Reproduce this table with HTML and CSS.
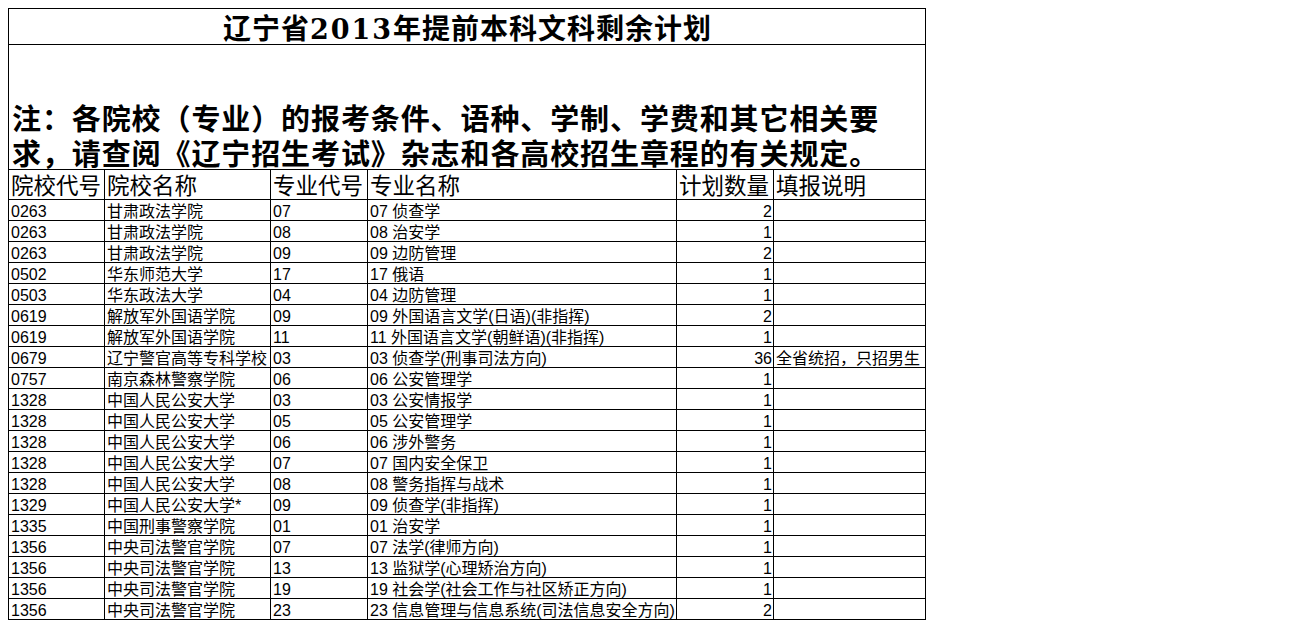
FILE: index.html
```html
<!DOCTYPE html>
<html lang="zh-CN">
<head>
<meta charset="utf-8">
<title>辽宁省2013年提前本科文科剩余计划</title>
<link rel="stylesheet" href="styles.css">
</head>
<body>
<table class="sheet">
  <colgroup>
    <col class="c1"><col class="c2"><col class="c3"><col class="c4"><col class="c5"><col class="c6">
  </colgroup>
  <tbody>
    <tr class="title-row"><td colspan="6" class="title">辽宁省<span class="digits">2013</span>年提前本科文科剩余计划</td></tr>
    <tr class="note-row"><td colspan="6" class="note"><span class="note-line first">注：各院校（专业）的报考条件、语种、学制、学费和其它相关要</span><span class="note-line last">求，请查阅《辽宁招生考试》杂志和各高校招生章程的有关规定。</span></td></tr>
    <tr class="head-row"><td>院校代号</td><td>院校名称</td><td>专业代号</td><td>专业名称</td><td>计划数量</td><td>填报说明</td></tr>
    <tr><td>0263</td><td>甘肃政法学院</td><td>07</td><td>07 侦查学</td><td class="num">2</td><td></td></tr>
    <tr><td>0263</td><td>甘肃政法学院</td><td>08</td><td>08 治安学</td><td class="num">1</td><td></td></tr>
    <tr><td>0263</td><td>甘肃政法学院</td><td>09</td><td>09 边防管理</td><td class="num">2</td><td></td></tr>
    <tr><td>0502</td><td>华东师范大学</td><td>17</td><td>17 俄语</td><td class="num">1</td><td></td></tr>
    <tr><td>0503</td><td>华东政法大学</td><td>04</td><td>04 边防管理</td><td class="num">1</td><td></td></tr>
    <tr><td>0619</td><td>解放军外国语学院</td><td>09</td><td>09 外国语言文学(日语)(非指挥)</td><td class="num">2</td><td></td></tr>
    <tr><td>0619</td><td>解放军外国语学院</td><td>11</td><td>11 外国语言文学(朝鲜语)(非指挥)</td><td class="num">1</td><td></td></tr>
    <tr><td>0679</td><td>辽宁警官高等专科学校</td><td>03</td><td>03 侦查学(刑事司法方向)</td><td class="num">36</td><td>全省统招，只招男生</td></tr>
    <tr><td>0757</td><td>南京森林警察学院</td><td>06</td><td>06 公安管理学</td><td class="num">1</td><td></td></tr>
    <tr><td>1328</td><td>中国人民公安大学</td><td>03</td><td>03 公安情报学</td><td class="num">1</td><td></td></tr>
    <tr><td>1328</td><td>中国人民公安大学</td><td>05</td><td>05 公安管理学</td><td class="num">1</td><td></td></tr>
    <tr><td>1328</td><td>中国人民公安大学</td><td>06</td><td>06 涉外警务</td><td class="num">1</td><td></td></tr>
    <tr><td>1328</td><td>中国人民公安大学</td><td>07</td><td>07 国内安全保卫</td><td class="num">1</td><td></td></tr>
    <tr><td>1328</td><td>中国人民公安大学</td><td>08</td><td>08 警务指挥与战术</td><td class="num">1</td><td></td></tr>
    <tr><td>1329</td><td>中国人民公安大学*</td><td>09</td><td>09 侦查学(非指挥)</td><td class="num">1</td><td></td></tr>
    <tr><td>1335</td><td>中国刑事警察学院</td><td>01</td><td>01 治安学</td><td class="num">1</td><td></td></tr>
    <tr><td>1356</td><td>中央司法警官学院</td><td>07</td><td>07 法学(律师方向)</td><td class="num">1</td><td></td></tr>
    <tr><td>1356</td><td>中央司法警官学院</td><td>13</td><td>13 监狱学(心理矫治方向)</td><td class="num">1</td><td></td></tr>
    <tr><td>1356</td><td>中央司法警官学院</td><td>19</td><td>19 社会学(社会工作与社区矫正方向)</td><td class="num">1</td><td></td></tr>
    <tr><td>1356</td><td>中央司法警官学院</td><td>23</td><td>23 信息管理与信息系统(司法信息安全方向)</td><td class="num">2</td><td></td></tr>
  </tbody>
</table>
</body>
</html>
```

FILE: styles.css
```css
html, body {
  background: #ffffff;
}
body {
  margin: 8px;
  color: #000000;
  font-family: "Liberation Sans", "Noto Sans CJK SC", sans-serif;
}
.sheet {
  border-collapse: collapse;
  table-layout: fixed;
  width: 917px;
  border: 1px solid #000;
}
.c1 { width: 96px; }
.c2 { width: 166px; }
.c3 { width: 97px; }
.c4 { width: 309px; }
.c5 { width: 97px; }
.c6 { width: 152px; }

.sheet td {
  border: 1px solid #000;
  padding: 0 1px 0 2px;
  height: 20px;
  line-height: 17px;
  font-size: 16px;
  white-space: nowrap;
  overflow: hidden;
  vertical-align: bottom;
}
.sheet td.num {
  text-align: right;
}
.sheet .title-row td.title {
  height: 29px;
  padding-top: 6px;
  line-height: 29px;
  text-align: center;
  vertical-align: top;
  font-family: "Liberation Serif", "Noto Sans CJK SC", serif;
  font-size: 28px;
  font-weight: 700;
  letter-spacing: 1px;
}
.title .digits {
  font-family: "DejaVu Serif", serif;
  font-size: 27px;
  letter-spacing: 2px;
}
.sheet .note-row td.note {
  height: 124px;
  font-size: 29px;
  font-weight: 700;
  letter-spacing: 0.9px;
  padding-left: 3px;
  font-family: "Liberation Serif", "Noto Sans CJK SC", serif;
}
.note-line {
  display: block;
}
.note-line.first {
  line-height: 35px;
}
.note-line.last {
  line-height: 27px;
  margin-top: 4px;
}
.sheet .head-row td {
  height: 29px;
  line-height: 25px;
  font-size: 22.5px;
  font-family: "Liberation Sans", "Noto Sans CJK SC", sans-serif;
  padding-left: 2px;
  padding-right: 0;
}
```
